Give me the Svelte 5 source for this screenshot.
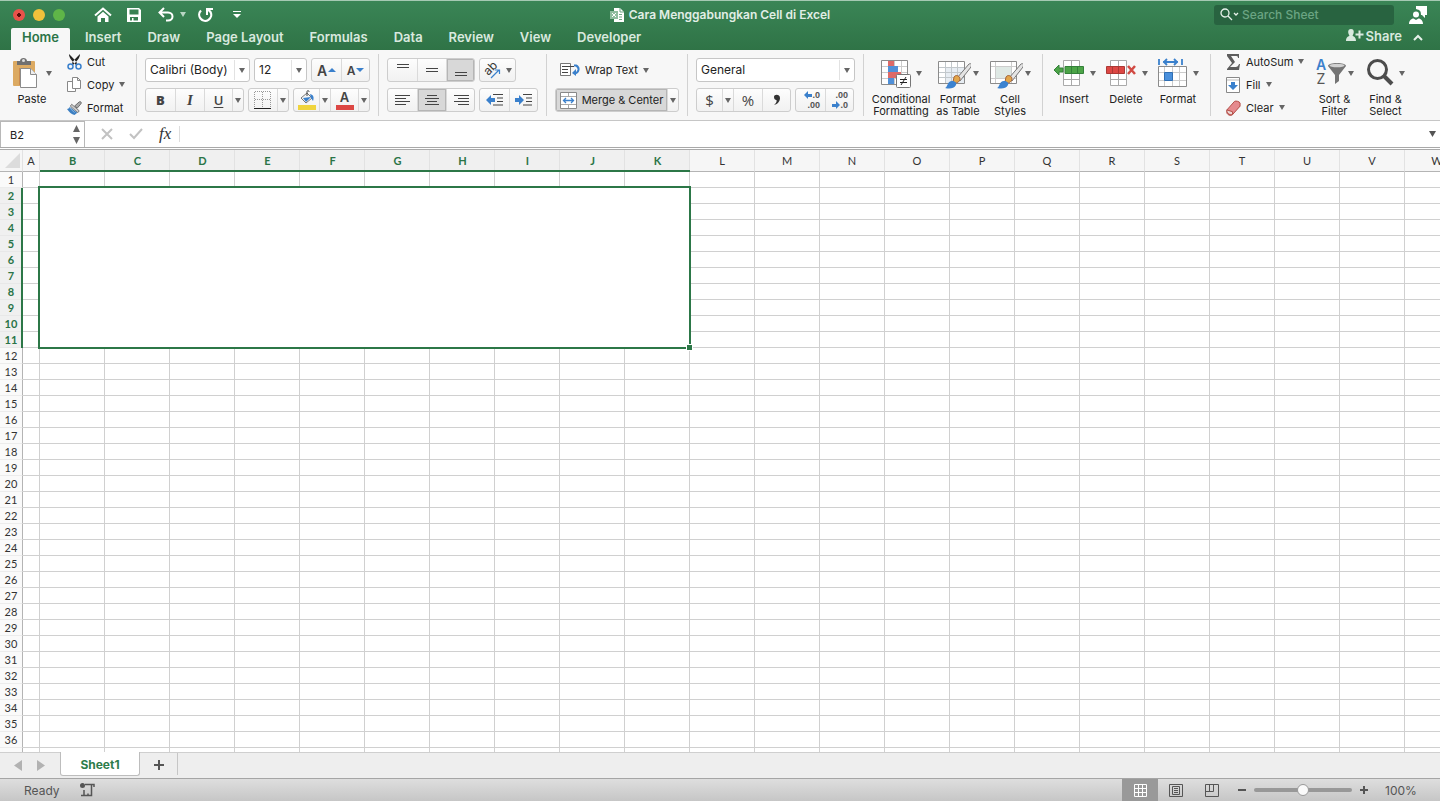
<script lang="ts">
	const tabs = ['Home', 'Insert', 'Draw', 'Page Layout', 'Formulas', 'Data', 'Review', 'View', 'Developer'];
	const columns = 'ABCDEFGHIJKLMNOPQRSTUVWXYZ'.split('');
	const rows = Array.from({ length: 60 }, (_, i) => i + 1);

	// merged range B2:K11
	const range = { left: 1, right: 10, top: 2, bottom: 11 };

	let activeTab = $state('Home');
	let vertical = $state('bottom');
	let horizontal = $state('center');
	let merged = $state(true);
	let zoom = $state(100);
	let cellName = $state('B2');
	let formula = $state('');
	let search = $state('');

	const inCols = (i: number) => i >= range.left && i <= range.right;
	const inRows = (n: number) => n >= range.top && n <= range.bottom;
</script>

{#snippet caret()}
	<svg class="caret" width="6" height="5" viewBox="0 0 6 5" aria-hidden="true"><path d="M0 0h6L3 5z" fill="currentColor" /></svg>
{/snippet}

{#snippet lines(list: number[][])}
	<svg width="16" height="16" viewBox="0 0 16 16" aria-hidden="true">
		{#each list as [x, y, w]}
			<rect {x} {y} width={w} height="1" fill="#444" />
		{/each}
	</svg>
{/snippet}

{#snippet brush()}
	<path d="M31 7 19 21l3 3L33 10c1-3 0-4-2-3z" fill="#e4e4e4" stroke="#777" />
	<path d="M16 20c2-3 6-1 6 2s-4 5-7 3z" fill="#e2a64b" stroke="#a4643a" />
	<path d="M7 31c3-1 2-7 7-7 3 0 5 2 4 4-2 4-7 4-11 3z" fill="#3c83d0" />
{/snippet}

<div class="app">
	<header>
		<div class="titlebar">
			<div class="quick">
				<div class="lights">
					<button class="light close" aria-label="Close"></button>
					<button class="light minimize" aria-label="Minimize"></button>
					<button class="light expand" aria-label="Full screen"></button>
				</div>
				<button class="bare home" aria-label="Home">
					<svg width="18" height="16" viewBox="0 0 18 16"><path d="M1 8.500 9 1.500l8 7" fill="none" stroke="#fff" stroke-width="2" /><path d="M3.500 9.500 9 4.800l5.500 4.700V15H11v-4H7v4H3.500z" fill="#fff" /></svg>
				</button>
				<button class="bare save" aria-label="Save">
					<svg width="14" height="14" viewBox="0 0 14 14"><path d="M0 0h12l2 2v12H0zM2.500 1.500v5h9v-5zM3 9v3.500h2V10h1.500v2.500H11V9z" fill="#fff" fill-rule="evenodd" /></svg>
				</button>
				<button class="bare undo" aria-label="Undo">
					<svg width="16" height="15" viewBox="0 0 16 15"><path d="M6 1 1.500 5.500 6 10M2 5.500h8c6 0 6 8 0 8H8" fill="none" stroke="#fff" stroke-width="2" /></svg>
				</button>
				<button class="bare pale" aria-label="Undo list">{@render caret()}</button>
				<button class="bare redo" aria-label="Redo">
					<svg width="16" height="16" viewBox="0 0 16 16"><path d="M3 3.500A6 6 0 1 0 12.500 5L10 2.500" fill="none" stroke="#fff" stroke-width="2.200" /><path d="M9 8V2h6" fill="none" stroke="#fff" stroke-width="2" /></svg>
				</button>
				<button class="bare" aria-label="Customize toolbar">
					<svg width="8" height="8" viewBox="0 0 8 8"><path d="M0 0h8v1H0zM0 3h8L4 7z" fill="#fff" /></svg>
				</button>
			</div>
			<div class="title">
				<svg width="14" height="14" viewBox="0 0 14 14" aria-hidden="true"><path d="M4 0h6l4 4v10H4z" fill="#fff" /><path d="M10 0v4h4M9 6.500h3M9 9h3M9 11.500h3" fill="none" stroke="#6fa785" /><path d="M0 3h8v8H0z" fill="#8fbd9f" /><path d="m2 5 4 4M6 5 2 9" stroke="#fff" /></svg>
				<span>Cara Menggabungkan Cell di Excel</span>
			</div>
			<div class="tools">
				<label class="search">
					<svg width="20" height="13" viewBox="0 0 20 13" aria-hidden="true"><circle cx="5" cy="5" r="4" fill="none" stroke="#e7f1ea" stroke-width="1.300" /><path d="m8 8 4 4M14 5l2 2 2-2" fill="none" stroke="#e7f1ea" stroke-width="1.300" /></svg>
					<input type="text" placeholder="Search Sheet" aria-label="Search Sheet" bind:value={search} />
				</label>
				<button class="bare" aria-label="Feedback">
					<svg width="18" height="18" viewBox="0 0 18 18"><path d="M7 0h11v9h-2v3l-3-3h-1c0-4-1-5-5-6z" fill="#fff" /><circle cx="7" cy="8.500" r="3" fill="#fff" /><path d="M0 18c0-4 3-5.500 4.500-5.500L7 14l2.500-1.500C11 12.500 14 14 14 18z" fill="#fff" /></svg>
				</button>
			</div>
		</div>
		<nav>
			<div class="tabs">
				{#each tabs as tab}
					<button class="tab" class:active={tab === activeTab} onclick={() => (activeTab = tab)}>{tab}</button>
				{/each}
			</div>
			<button class="share">
				<svg width="18" height="13" viewBox="0 0 18 13" aria-hidden="true"><path d="M5 0c4 0 3 5 1.500 6.500C8 8 10 8 10 12H0c0-4 2-4 3.500-5.500C2 5 1 0 5 0z" fill="#d9e9df" /><path d="M13.500 1.500v8M9.500 5.500h8" stroke="#d9e9df" stroke-width="2" /></svg>
				Share
			</button>
			<button class="bare collapse" aria-label="Collapse ribbon">
				<svg width="10" height="7" viewBox="0 0 10 7"><path d="m1 6 4-4 4 4" fill="none" stroke="#e7f1ea" stroke-width="2" /></svg>
			</button>
		</nav>
	</header>

	<section class="ribbon" aria-label="Ribbon">
		<div class="group clipboard">
			<button class="big paste">
				<span class="art">
					<svg width="26" height="32" viewBox="0 0 26 32" aria-hidden="true"><rect x="1" y="4" width="22" height="25" rx="1" fill="#dcaa62" /><path d="M5 8V4h3c0-4 7-4 7 0h4v4z" fill="#707070" /><circle cx="11.500" cy="3.500" r="1.500" fill="#ddd" /><path d="M8 11v17" stroke="#b66a3c" /><path d="M8.500 11.500h10l6 6v13h-16z" fill="#fff" stroke="#8b8b8b" /><path d="M18.500 11.500v6h6" fill="#eee" stroke="#8b8b8b" /></svg>
					{@render caret()}
				</span>
				<span>Paste</span>
			</button>
			<div class="stack">
				<button class="small">
					<svg width="15" height="16" viewBox="0 0 15 16" aria-hidden="true"><path d="M2 0c0 4 3 7 7 11l1-2C8 6 5 3 2 0zM13 0c0 4-3 7-7 11L5 9c2-3 5-6 8-9z" fill="#222" /><circle cx="3.500" cy="12.500" r="2.500" fill="none" stroke="#3a80cc" stroke-width="1.500" /><circle cx="11.500" cy="12.500" r="2.500" fill="none" stroke="#3a80cc" stroke-width="1.500" /></svg>
					Cut
				</button>
				<button class="small copy">
					<svg width="15" height="16" viewBox="0 0 15 16" aria-hidden="true"><path d="M.5 4.500h8v10h-8z" fill="#fff" stroke="#888" /><path d="M5.500.5h5l3 3v8h-8zM10.500.5v3h3" fill="#fff" stroke="#888" /></svg>
					Copy {@render caret()}
				</button>
				<button class="small">
					<svg width="15" height="16" viewBox="0 0 16 16" aria-hidden="true"><path d="m8 6 5-4.500c2-1 3 1 1.500 2.500L11 8z" fill="#aaa" stroke="#666" /><path d="m5 4 8 7-1.500 2L3.500 6z" fill="#ccc" stroke="#777" /><path d="m3 7 8 6-3 2.500C5 15 2 12 0 9c2 0 2-1 3-2z" fill="#3c7fc2" /><path d="m3 8 5 5" stroke="#8fb6dc" /></svg>
					Format
				</button>
			</div>
		</div>

		<div class="group rows font">
			<div class="row">
				<span class="combo family"><select aria-label="Font"><option>Calibri (Body)</option></select>{@render caret()}</span>
				<span class="combo size"><select aria-label="Font size"><option>12</option></select>{@render caret()}</span>
				<div class="box">
					<button class="w29 letter grow" aria-label="Increase font size">A<svg width="8" height="4" viewBox="0 0 8 4"><path d="M0 4h8L4 0z" fill="#3a80cc" /></svg></button>
					<button class="w28 letter" aria-label="Decrease font size">A<svg width="8" height="4" viewBox="0 0 8 4"><path d="M0 0h8L4 4z" fill="#3a80cc" /></svg></button>
				</div>
			</div>
			<div class="row">
				<div class="box">
					<button class="w29 glyph"><b>B</b></button>
					<button class="w29 glyph"><i>I</i></button>
					<button class="w28 glyph"><u>U</u></button>
					<button class="drop" aria-label="Underline styles">{@render caret()}</button>
				</div>
				<div class="box">
					<button class="w28" aria-label="Borders"><svg width="18" height="18" viewBox="0 0 18 18"><path d="M1 .5h16M1 8.500h16M.5 1v15M8.500 1v15M16.500 1v15" stroke="#999" stroke-dasharray="1 1" /><path d="M0 17.500h17" stroke="#222" /></svg></button>
					<button class="drop" aria-label="Border styles">{@render caret()}</button>
				</div>
				<div class="box">
					<button class="w25" aria-label="Fill color"><svg width="18" height="20" viewBox="0 0 18 20"><path d="m3 8 6-5 5 5-6 5z" fill="#f5f5f5" stroke="#777" /><path d="m5 8 8-1-5 5z" fill="#3a80cc" /><path d="M9 6V2c0-2 2-2 2 0" fill="none" stroke="#444" /><path d="M12 4c4 1 4 4 3 7l-2-3z" fill="#3a80cc" /><path d="M0 15h18v5H0z" fill="#f0d43c" /></svg></button>
					<button class="drop" aria-label="Fill colors">{@render caret()}</button>
					<button class="w28 color" aria-label="Font color"><span>A</span></button>
					<button class="drop" aria-label="Font colors">{@render caret()}</button>
				</div>
			</div>
		</div>

		<div class="group rows align">
			<div class="row">
				<div class="box">
					<button class="w29" class:on={vertical === 'top'} aria-label="Top align" onclick={() => (vertical = 'top')}>{@render lines([[2, 2, 12], [2, 5, 12]])}</button>
					<button class="w29" class:on={vertical === 'middle'} aria-label="Middle align" onclick={() => (vertical = 'middle')}>{@render lines([[2, 6, 12], [2, 9, 12]])}</button>
					<button class="w28" class:on={vertical === 'bottom'} aria-label="Bottom align" onclick={() => (vertical = 'bottom')}>{@render lines([[2, 10, 12], [2, 13, 12]])}</button>
				</div>
				<div class="box">
					<button class="orient" aria-label="Orientation">
						<svg width="20" height="20" viewBox="0 0 20 20"><text x="-7" y="3" transform="translate(8 9) rotate(-45)" font-size="12" fill="#333">ab</text><path d="m8 18 8-8m-4 0h4.500v4" fill="none" stroke="#3a80cc" stroke-width="1.200" /></svg>
						{@render caret()}
					</button>
				</div>
			</div>
			<div class="row">
				<div class="box">
					<button class="w29" class:on={horizontal === 'left'} aria-label="Align left" onclick={() => (horizontal = 'left')}>{@render lines([[0, 3, 15], [0, 6, 11], [0, 9, 15], [0, 12, 11]])}</button>
					<button class="w29" class:on={horizontal === 'center'} aria-label="Center" onclick={() => (horizontal = 'center')}>{@render lines([[3, 3, 10], [1, 6, 14], [3, 9, 10], [1, 12, 14]])}</button>
					<button class="w28" class:on={horizontal === 'right'} aria-label="Align right" onclick={() => (horizontal = 'right')}>{@render lines([[1, 3, 15], [5, 6, 11], [1, 9, 15], [5, 12, 11]])}</button>
				</div>
				<div class="box">
					<button class="w29" aria-label="Decrease indent"><svg width="18" height="12" viewBox="0 0 18 12"><path d="m0 6 5-5v3h4v4H5v3z" fill="#3a80cc" /><path d="M7 .5h10M11 4h6M11 7.500h6M7 11h10" stroke="#444" /></svg></button>
					<button class="w28" aria-label="Increase indent"><svg width="18" height="12" viewBox="0 0 18 12"><path d="M9 6 4 1v3H0v4h4v3z" fill="#3a80cc" /><path d="M8 .5h9M11 4h6M11 7.500h6M8 11h9" stroke="#444" /></svg></button>
				</div>
			</div>
		</div>

		<div class="group rows merge-group">
			<div class="row">
				<button class="wrap">
					<svg width="20" height="14" viewBox="0 0 20 14" aria-hidden="true"><path d="M.5.500h10v12H.5z" fill="#fff" stroke="#777" /><path d="M2 3.500h12M2 6.500h6M2 9.500h6" stroke="#444" /><path d="M14 2.500h2c4 2 3 7-1 8" fill="none" stroke="#3a80cc" stroke-width="2" /><path d="m12 10 4-4v7z" fill="#3a80cc" /></svg>
					Wrap Text {@render caret()}
				</button>
			</div>
			<div class="row">
				<div class="box">
					<button class="merge" class:on={merged} onclick={() => (merged = !merged)}>
						<svg width="17" height="17" viewBox="0 0 17 17" aria-hidden="true"><path d="M.5.500h16v16H.5z" fill="#fff" stroke="#888" /><path d="M1 4.500h15M1 12.500h15M8.500 1v3M8.500 13v3" stroke="#aaa" /><path d="M4 8.500h9M6 6 3.500 8.500 6 11M11 6l2.500 2.500L11 11" fill="none" stroke="#3a80cc" stroke-width="1.300" /></svg>
						Merge &amp; Center
					</button>
					<button class="drop" aria-label="Merge options">{@render caret()}</button>
				</div>
			</div>
		</div>

		<div class="group rows number">
			<div class="row">
				<span class="combo format"><select aria-label="Number format"><option>General</option></select>{@render caret()}</span>
			</div>
			<div class="row">
				<div class="box">
					<button class="w25 money">$</button>
					<button class="drop" aria-label="Currency formats">{@render caret()}</button>
					<button class="w29 money">%</button>
					<button class="w28" aria-label="Comma style"><svg width="8" height="12" viewBox="0 0 8 12"><path d="M1 3c0-3 6-3 6 1 0 3-2 6-6 7 2-2 3-3 2.500-5C2 6 1 5 1 3z" fill="#333" /></svg></button>
				</div>
				<div class="box">
					<button class="w29 decimals" aria-label="Increase decimal">
						<span><svg width="8" height="8" viewBox="0 0 8 8"><path d="m0 4 4-4v3h4v3H4v2z" fill="#3a80cc" /></svg>.0</span>
						<span>.00</span>
					</button>
					<button class="w28 decimals" aria-label="Decrease decimal">
						<span>.00</span>
						<span><svg width="8" height="8" viewBox="0 0 8 8"><path d="M8 4 4 0v3H0v3h4v2z" fill="#3a80cc" /></svg>.0</span>
					</button>
				</div>
			</div>
		</div>

		<div class="group styles">
			<button class="big cond">
				<span class="art">
					<svg width="30" height="32" viewBox="0 0 30 32" aria-hidden="true"><path d="M.5 3.500h26v24H.5z" fill="#fff" stroke="#8b8b8b" /><path d="M1 9.500h25M1 15.500h25M1 21.500h25M7.500 4v23M13.500 4v23M20.500 4v23" stroke="#ccc" /><path d="M7 4h6v5H7zM7 15h13v6H7z" fill="#de6a68" /><path d="M7 9h10v6H7zM7 21h6v6H7z" fill="#5090d8" /><rect x="15.500" y="17.500" width="14" height="13" rx="1" fill="#fff" stroke="#777" /><path d="M19 22.500h7M19 25.500h7M25 20l-5 8" stroke="#222" /></svg>
					{@render caret()}
				</span>
				<span>Conditional<br />Formatting</span>
			</button>
			<button class="big table-style">
				<span class="art">
					<svg width="33" height="32" viewBox="0 0 33 32" aria-hidden="true"><path d="M.5 4.500h26v22H.5z" fill="#fff" stroke="#8b8b8b" /><path d="M7 10h19v16H7z" fill="#e7edf3" /><path d="M1 10.500h25M1 15.500h25M1 20.500h25M7.500 5v21M13.500 5v21M19.500 5v21" stroke="#c2c8cc" />{@render brush()}</svg>
					{@render caret()}
				</span>
				<span>Format<br />as Table</span>
			</button>
			<button class="big cell-style">
				<span class="art">
					<svg width="33" height="32" viewBox="0 0 33 32" aria-hidden="true"><path d="M.5 4.500h26v22H.5z" fill="#fff" stroke="#8b8b8b" /><path d="M1 9.500h25M1 21.500h25M5.500 5v21M21.500 5v21" stroke="#ccc" /><path d="M6 10h15v11H6z" fill="#dfe9e5" />{@render brush()}</svg>
					{@render caret()}
				</span>
				<span>Cell<br />Styles</span>
			</button>
		</div>

		<div class="group cells">
			<button class="big">
				<span class="art">
					<svg width="32" height="32" viewBox="0 0 32 32" aria-hidden="true"><path d="M10.500 3.500h16v25h-16zM18.500 4v24M11 22.500h15" fill="#fff" stroke="#aaa" /><path d="M12 9.500h18.500v7H12z" fill="#4ca447" stroke="#34813a" /><path d="M18.500 9v8M24.500 9v8" stroke="#34813a" /><path d="m1 13 5-5v3h4v4H6v3z" fill="#4ca447" stroke="#34813a" /></svg>
					{@render caret()}
				</span>
				<span>Insert</span>
			</button>
			<button class="big">
				<span class="art">
					<svg width="32" height="32" viewBox="0 0 32 32" aria-hidden="true"><path d="M5.500 3.500h16v25h-16zM13.500 4v24M6 22.500h15" fill="#fff" stroke="#aaa" /><path d="M1.500 9.500h18v7h-18z" fill="#dc4744" stroke="#ac3935" /><path d="M7.500 9v8M13.500 9v8" stroke="#ac3935" /><path d="m23 9 7 8m0-8-7 8" stroke="#d14a43" stroke-width="2.500" /></svg>
					{@render caret()}
				</span>
				<span>Delete</span>
			</button>
			<button class="big">
				<span class="art">
					<svg width="30" height="32" viewBox="0 0 30 32" aria-hidden="true"><path d="M1 2v6M24 2v6M5 5h15M9 2 6 5l3 3M16 2l3 3-3 3" fill="none" stroke="#3a80cc" stroke-width="1.800" /><path d="M.5 9.500h28v20H.5z" fill="#fff" stroke="#8b8b8b" /><path d="M1 15.500h27M1 23.500h27M6.500 10v19M14.500 10v19M21.500 10v19" stroke="#ccc" /><path d="M6.500 15.500h8v8h-8z" fill="#4a90dc" stroke="#2f6eb2" /></svg>
					{@render caret()}
				</span>
				<span>Format</span>
			</button>
		</div>

		<div class="group editing">
			<div class="stack">
				<button class="small">
					<svg width="15" height="16" viewBox="0 0 15 16" aria-hidden="true"><path d="M1 0h12v4h-1c0-2-1-2-3-2H5l4 6-5 5h5c3 0 3-1 4-3h1l-1 6H1v-1l5-6-5-7z" fill="#5c5c5c" /></svg>
					AutoSum {@render caret()}
				</button>
				<button class="small">
					<svg width="15" height="16" viewBox="0 0 15 16" aria-hidden="true"><path d="M.5.500h13v15H.5z" fill="#fff" stroke="#888" /><path d="M1 3h12" stroke="#bbb" stroke-width="1" /><path d="M5 5h4v3h3l-5 5-5-5h3z" fill="#3a80cc" /></svg>
					Fill {@render caret()}
				</button>
				<button class="small">
					<svg width="15" height="16" viewBox="0 0 16 16" aria-hidden="true"><path d="m1 10 8-9c1-1 6 0 6 2v3l-8 9c-2 2-6 0-6-2z" fill="#e58a8e" stroke="#b0463f" /><path d="m1 10 6 2v3c-2 1-6-1-6-3z" fill="#ecd5d3" stroke="#b0463f" /></svg>
					Clear {@render caret()}
				</button>
			</div>
			<button class="big">
				<span class="art sort">
					<svg width="31" height="32" viewBox="0 0 31 32" aria-hidden="true"><text x="6" y="13" text-anchor="middle" font-size="14" font-weight="600" fill="#3a80cc">A</text><text x="6" y="27" text-anchor="middle" font-size="14" fill="#555">Z</text><path d="M13 9c0-4 18-4 18 0l-7 9v6l-4 3v-9z" fill="#747474" /><ellipse cx="22" cy="8.500" rx="7.500" ry="1.800" fill="#d2d2d2" /></svg>
					{@render caret()}
				</span>
				<span>Sort &amp;<br />Filter</span>
			</button>
			<button class="big">
				<span class="art">
					<svg width="28" height="32" viewBox="0 0 28 32" aria-hidden="true"><circle cx="11.500" cy="12.500" r="9" fill="#f8f8f8" stroke="#4d4d4d" stroke-width="3" /><path d="m18 19 8 8" stroke="#4d4d4d" stroke-width="4" /></svg>
					{@render caret()}
				</span>
				<span>Find &amp;<br />Select</span>
			</button>
		</div>
	</section>

	<div class="formula-bar">
		<div class="namebox">
			<input type="text" aria-label="Name box" bind:value={cellName} />
			<svg width="7" height="19" viewBox="0 0 7 19" aria-hidden="true"><path d="M0 7h7L3.500 0zM0 12h7l-3.500 7z" fill="#666" /></svg>
		</div>
		<button class="bare" aria-label="Cancel"><svg width="12" height="12" viewBox="0 0 12 12"><path d="m1 1 10 10M11 1 1 11" stroke="#c2c2c2" stroke-width="2" /></svg></button>
		<button class="bare" aria-label="Enter"><svg width="14" height="12" viewBox="0 0 14 12"><path d="m1 6 4 4 8-9" fill="none" stroke="#c2c2c2" stroke-width="2" /></svg></button>
		<button class="bare fx">fx</button>
		<input class="formula" type="text" aria-label="Formula" bind:value={formula} />
		<button class="bare expand-formula" aria-label="Expand formula bar"><svg width="7" height="6" viewBox="0 0 7 6"><path d="M0 0h7L3.500 6z" fill="#555" /></svg></button>
	</div>

	<main>
		<table>
			<colgroup>
				<col class="col-head" />
				{#each columns as c, i}
					<col class={i === 0 ? 'col-a' : 'col'} />
				{/each}
			</colgroup>
			<thead>
				<tr>
					<th class="corner" aria-label="Select all"><svg width="15" height="15" viewBox="0 0 15 15" aria-hidden="true"><path d="M15 0v15H0z" fill="#dcdcdc" /></svg></th>
					{#each columns as c, i}
						<th scope="col" class:picked={inCols(i)}>{c}</th>
					{/each}
				</tr>
			</thead>
			<tbody>
				{#each rows as n}
					<tr>
						<th scope="row" class:picked={inRows(n)}>{n}</th>
						{#each columns as c, i}
							{#if n === range.top && i === range.left}
								<td class="selected" rowspan={range.bottom - range.top + 1} colspan={range.right - range.left + 1}>
									<div class="outline"><span class="handle"></span></div>
								</td>
							{:else if !(inRows(n) && inCols(i))}
								<td></td>
							{/if}
						{/each}
					</tr>
				{/each}
			</tbody>
		</table>
	</main>

	<div class="sheets">
		<button class="bare arrow" aria-label="Previous sheet"><svg width="8" height="11" viewBox="0 0 8 11"><path d="M8 0v11L0 5.500z" fill="#b2b2b2" /></svg></button>
		<button class="bare arrow" aria-label="Next sheet"><svg width="8" height="11" viewBox="0 0 8 11"><path d="M0 0v11l8-5.500z" fill="#b2b2b2" /></svg></button>
		<button class="sheet">Sheet1</button>
		<button class="bare add" aria-label="Add sheet"><svg width="10" height="10" viewBox="0 0 10 10"><path d="M5 0v10M0 5h10" stroke="#555" stroke-width="2" /></svg></button>
	</div>

	<footer>
		<span class="ready">Ready</span>
		<button class="bare macro" aria-label="Record macro"><svg width="15" height="14" viewBox="0 0 15 14"><circle cx="2.500" cy="2.500" r="2.500" fill="#555" /><path d="M5 1.500h9V4M11.500 2v10.500H8M4 7v5.500M1 12.500h7v-2" fill="none" stroke="#555" stroke-width="1.500" /></svg></button>
		<div class="views">
			<button class="view on" aria-label="Normal view"><svg width="13" height="13" viewBox="0 0 13 13"><path d="M.5.500h12v12H.5zM4.500 0v13M8.500 0v13M0 4.500h13M0 8.500h13" fill="none" stroke="#fff" /></svg></button>
			<button class="view" aria-label="Page layout view"><svg width="14" height="13" viewBox="0 0 14 13"><path d="M.5.500h13v12H.5zM3.500 2.500h7v8h-7zM5 4.500h4M5 6.500h4M5 8.500h4" fill="none" stroke="#555" /></svg></button>
			<button class="view" aria-label="Page break view"><svg width="14" height="13" viewBox="0 0 14 13"><path d="M.5.500h13v12H.5zM.5 7.500h8v-7M4.500.500v7" fill="none" stroke="#555" /></svg></button>
		</div>
		<button class="bare" aria-label="Zoom out" onclick={() => (zoom = Math.max(10, zoom - 10))}><svg width="8" height="8" viewBox="0 0 8 8"><path d="M0 4h8" stroke="#555" stroke-width="2" /></svg></button>
		<input class="zoom" type="range" min="0" max="200" aria-label="Zoom" bind:value={zoom} />
		<button class="bare" aria-label="Zoom in" onclick={() => (zoom = Math.min(200, zoom + 10))}><svg width="8" height="8" viewBox="0 0 8 8"><path d="M4 0v8M0 4h8" stroke="#555" stroke-width="2" /></svg></button>
		<span class="percent">{zoom}%</span>
	</footer>
</div>

<style>
	:global(body) {
		margin: 0;
		background: #fff;
	}

	.app {
		display: flex;
		flex-direction: column;
		height: 100vh;
		overflow: hidden;
		font-family: Inter, 'Liberation Sans', sans-serif;
		font-size: 11px;
		color: #222;
	}

	button,
	input,
	select {
		box-sizing: border-box;
		margin: 0;
		padding: 0;
		border: 0;
		background: none;
		font: inherit;
		color: inherit;
		outline: none;
	}

	button {
		display: flex;
		align-items: center;
		justify-content: center;
		flex: none;
		white-space: nowrap;
	}

	svg {
		display: block;
		flex: none;
	}

	.caret {
		color: #666;
	}

	/* header */
	header {
		flex: none;
		background: linear-gradient(#3a8556, #2f7346);
		border-top: 1px solid #a5c9b3;
		color: #d9e9df;
		font-size: 13px;
	}

	.titlebar {
		display: grid;
		grid-template-columns: 1fr auto 1fr;
		align-items: center;
		height: 27px;
	}

	.quick {
		display: flex;
		align-items: center;
		padding-left: 13px;
	}

	.lights {
		display: flex;
		gap: 8px;
		margin-right: 29px;
	}

	.light {
		width: 12px;
		height: 12px;
		border-radius: 50%;
	}

	.close {
		background: radial-gradient(circle, #5b0d0b 2px, #e9524a 2px);
	}

	.minimize {
		background: #f1c13b;
	}

	.expand {
		background: #5fb548;
	}

	.save {
		margin: 0 17px 0 15px;
	}

	.pale {
		margin: 0 12px 0 6px;
	}

	.pale .caret {
		color: #b9d6c4;
	}

	.redo {
		margin-right: 19px;
	}

	.title {
		display: flex;
		align-items: center;
		gap: 5px;
		font-size: 12px;
		font-weight: 600;
		color: #e1eee6;
	}

	.tools {
		display: flex;
		align-items: center;
		justify-content: flex-end;
		gap: 15px;
		padding-right: 13px;
	}

	.search {
		display: flex;
		align-items: center;
		gap: 2px;
		width: 180px;
		height: 20px;
		padding-left: 6px;
		box-sizing: border-box;
		background: #286340;
		border-radius: 3px;
	}

	.search input {
		flex: 1;
		min-width: 0;
		font-size: 12px;
		font-weight: 500;
	}

	.search input::placeholder {
		color: #6ba583;
		opacity: 1;
	}

	nav {
		display: flex;
		align-items: center;
		height: 22px;
		padding: 0 17px 0 11px;
	}

	.tabs {
		display: flex;
		gap: 4px;
		flex: 1;
	}

	.tab {
		height: 22px;
		padding: 0 11px 4px;
		font-weight: 600;
		border-radius: 2px 2px 0 0;
	}

	.tab.active {
		background: #f7f7f7;
		color: #2a7447;
	}

	.share {
		gap: 2px;
		height: 16px;
		margin-bottom: 7px;
		font-weight: 600;
	}

	.collapse {
		margin-left: 11px;
		margin-bottom: 4px;
	}

	/* ribbon */
	.ribbon {
		display: flex;
		flex: none;
		height: 71px;
		box-sizing: border-box;
		background: #f7f7f7;
		border-bottom: 1px solid #c6c6c6;
	}

	.group {
		display: flex;
		flex: none;
		box-sizing: border-box;
		margin: 4px 0;
		border-right: 1px solid #d2d2d2;
	}

	.group:last-child {
		border-right: 0;
	}

	.rows {
		flex-direction: column;
		gap: 6px;
		padding: 4px 0 0 8px;
	}

	.row {
		display: flex;
		gap: 4px;
		height: 24px;
	}

	.clipboard {
		width: 137px;
	}

	.font {
		width: 242px;
	}

	.align {
		width: 168px;
	}

	.merge-group {
		width: 141px;
	}

	.number {
		width: 176px;
	}

	.styles {
		width: 179px;
		padding-left: 7px;
	}

	.cells {
		width: 168px;
		padding-left: 5px;
	}

	.editing {
		padding-left: 15px;
	}

	.stack {
		display: flex;
		flex-direction: column;
		width: 83px;
		margin-top: -4px;
	}

	.clipboard .stack {
		width: 70px;
		padding-left: 3px;
	}

	.small {
		justify-content: flex-start;
		gap: 5px;
		height: 23px;
	}

	.big {
		flex-direction: column;
		justify-content: flex-start;
		gap: 4px;
		width: 52px;
		padding-top: 3px;
		line-height: 12px;
		text-align: center;
	}

	.editing .big {
		width: 51px;
	}

	.paste {
		width: 64px;
	}

	.cond {
		width: 60px;
	}

	.table-style {
		width: 54px;
	}

	.cell-style {
		width: 50px;
	}

	.art {
		display: flex;
		align-items: center;
		gap: 5px;
	}

	.table-style .art,
	.cell-style .art,
	.sort {
		gap: 2px;
	}

	.paste .art {
		gap: 8px;
	}

	.box {
		display: flex;
		box-sizing: border-box;
		height: 24px;
		background: linear-gradient(#fdfdfd, #f1f1f1);
		border: 1px solid #cdcdcd;
		border-radius: 3px;
		overflow: hidden;
	}

	.box button + button {
		border-left: 1px solid #dadada;
	}

	.box button.on {
		background: #d8d8d8;
		box-shadow: inset 0 0 0 1px #b5b5b5;
	}

	.w25 {
		width: 25px;
	}

	.w28 {
		width: 28px;
	}

	.w29 {
		width: 29px;
	}

	.drop {
		width: 11px;
	}

	.letter {
		gap: 1px;
		font-size: 12px;
		font-weight: 600;
		color: #444;
	}

	.grow {
		font-size: 14px;
	}

	.glyph {
		font-family: 'Open Sans', sans-serif;
		font-size: 13px;
		font-weight: 600;
		color: #444;
	}

	.glyph i {
		font-family: 'Liberation Serif', serif;
		font-size: 15px;
	}

	.glyph u {
		text-underline-offset: 2px;
	}

	.color span {
		width: 18px;
		height: 20px;
		box-sizing: border-box;
		border-bottom: 5px solid #dc4744;
		font-size: 13px;
		font-weight: 600;
		line-height: 14px;
		color: #444;
	}

	.money {
		font-family: 'Open Sans', sans-serif;
		font-size: 15px;
		color: #444;
	}

	.box .decimals {
		flex-direction: column;
		align-items: flex-end;
		padding-right: 5px;
		font-family: 'Liberation Sans', sans-serif;
		font-size: 9px;
		font-weight: 700;
		line-height: 10px;
		color: #555;
	}

	.decimals span {
		display: flex;
		align-items: center;
		height: 10px;
	}

	.orient {
		gap: 3px;
		width: 35px;
	}

	.combo {
		display: flex;
		align-items: center;
		box-sizing: border-box;
		height: 24px;
		padding-right: 4px;
		background: #fff;
		border: 1px solid #c6c6c6;
		border-radius: 3px;
		font-size: 12px;
	}

	.combo select {
		flex: 1;
		min-width: 0;
		height: 20px;
		margin-right: 4px;
		padding-left: 4px;
		padding-bottom: 2px;
		border-right: 1px solid #e2e2e2;
		appearance: none;
	}

	.family {
		width: 105px;
	}

	.size {
		width: 53px;
	}

	.format {
		width: 159px;
	}

	.wrap {
		gap: 5px;
		padding-left: 5px;
	}

	.merge {
		gap: 5px;
		width: 111px;
	}

	/* formula bar */
	.formula-bar {
		display: flex;
		flex: none;
		align-items: center;
		height: 26px;
		gap: 16px;
		padding-right: 4px;
		background: #fff;
		border-bottom: 3px double #a9a9a9;
	}

	.namebox {
		display: flex;
		align-items: center;
		box-sizing: border-box;
		width: 85px;
		height: 26px;
		padding: 0 4px 0 9px;
		border: 1px solid #b8b8b8;
		border-width: 1px 1px 0;
	}

	.namebox input {
		flex: 1;
		min-width: 0;
	}

	.fx {
		font-family: 'Liberation Serif', serif;
		font-size: 17px;
		font-style: italic;
		color: #333;
	}

	.formula {
		flex: 1;
		height: 16px;
		margin-left: -8px;
		padding-left: 6px;
		border-left: 1px solid #ddd;
	}

	/* grid */
	main {
		flex: 1;
		min-height: 0;
		overflow: hidden;
		background: #fff;
	}

	table {
		width: max-content;
		table-layout: fixed;
		border-collapse: separate;
		border-spacing: 0;
	}

	.col-head {
		width: 23px;
	}

	.col-a {
		width: 17px;
	}

	.col {
		width: 65px;
	}

	th,
	td {
		box-sizing: border-box;
		height: 16px;
		padding: 0;
		border-right: 1px solid #d0d0d0;
		border-bottom: 1px solid #d0d0d0;
	}

	th {
		font-family: Lato, sans-serif;
		font-size: 11px;
		font-weight: 400;
		line-height: 15px;
		color: #333;
		background: #fff;
	}

	thead th {
		height: 22px;
		background: #f6f6f6;
		border-right-color: #e2e2e2;
		border-bottom-color: #b4b4b4;
	}

	tbody th {
		background: #fafafa;
		border-right-color: #b4b4b4;
		border-bottom-color: #ececec;
	}

	th.picked {
		background: #f0f0f0;
		font-weight: 700;
		color: #2a7447;
	}

	/* inset shadows keep the green line unbroken between neighbouring headers */
	thead th.picked {
		padding-bottom: 1px;
		border: 0;
		box-shadow: inset 0 -2px #2c7747, inset -1px 0 #e2e2e2;
	}

	tbody th.picked {
		padding: 0 1px 1px 0;
		border: 0;
		box-shadow: inset -2px 0 #2c7747, inset 0 -1px #e8e8e8;
	}

	.corner svg {
		margin-left: 5px;
	}

	.selected {
		position: relative;
	}

	.outline {
		position: absolute;
		inset: -2px;
		border: 2px solid #2c7747;
	}

	.handle {
		position: absolute;
		right: -3px;
		bottom: -3px;
		width: 5px;
		height: 5px;
		background: #2c7747;
		box-shadow: 0 0 0 1px #fff;
	}

	/* bottom bars */
	.sheets {
		display: flex;
		flex: none;
		height: 26px;
		box-sizing: border-box;
		padding-left: 14px;
		background: #eee;
		border-top: 1px solid #cfcfcf;
	}

	.arrow {
		width: 8px;
		margin-right: 15px;
	}

	.sheet {
		width: 80px;
		height: 24px;
		margin-top: -1px;
		padding-top: 2px;
		background: #fff;
		border: 1px solid #bdbdbd;
		border-top: 0;
		border-radius: 0 0 3px 3px;
		font-size: 12px;
		font-weight: 700;
		color: #2c7c4a;
	}

	.add {
		width: 38px;
		height: 22px;
		padding-top: 2px;
		border-right: 1px solid #c6c6c6;
	}

	footer {
		display: flex;
		flex: none;
		align-items: center;
		height: 23px;
		box-sizing: border-box;
		padding: 0 24px;
		background: linear-gradient(#dedede, #c6c6c6);
		border-top: 1px solid #a5a5a5;
		font-size: 12px;
		color: #555;
	}

	.macro {
		margin-left: 20px;
	}

	.views {
		display: flex;
		margin-left: auto;
		margin-right: 8px;
	}

	.view {
		width: 36px;
		height: 22px;
	}

	.view.on {
		background: #999;
	}

	.zoom {
		width: 98px;
		height: 14px;
		margin: 0 8px;
		appearance: none;
	}

	.zoom::-webkit-slider-runnable-track {
		height: 4px;
		background: #989898;
		border-radius: 2px;
	}

	.zoom::-webkit-slider-thumb {
		appearance: none;
		width: 12px;
		height: 12px;
		margin-top: -4px;
		background: #fafafa;
		border: 1px solid #999;
		border-radius: 50%;
	}

	.percent {
		width: 31px;
		margin-left: 17px;
	}
</style>
